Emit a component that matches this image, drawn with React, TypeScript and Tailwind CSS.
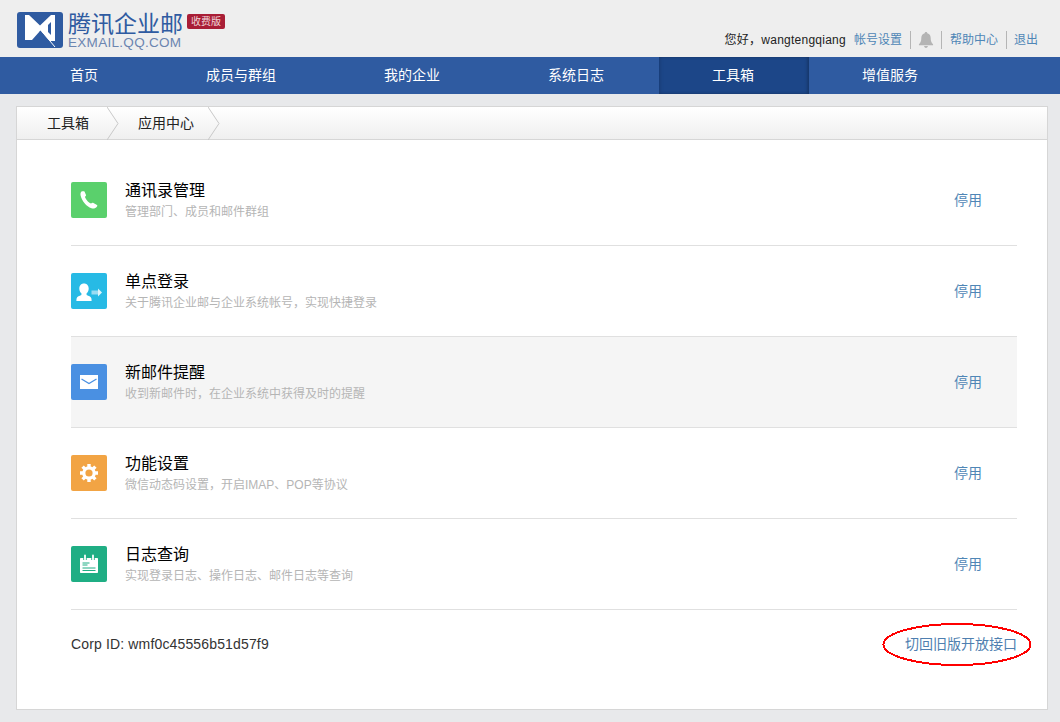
const navItems = ["首页", "成员与群组", "我的企业", "系统日志", "工具箱", "增值服务"];

function PhoneIcon() {
  return (
    <svg width="18" height="18" viewBox="0 0 18 18" fill="#fff" className="ml-[0px]">
      <path d="M1.500.5C2.500 0 4 0 4.500.6L6 4c.2.600-.2 1-1 1.800.5 2.200 3 5.700 6 6.700 1-.7 1.500-1 2-.7l4 2.200c.5.500.5 1 0 1.500-1.500 2-3.500 2.500-5.500 1.800C6.500 15.500 1.800 10 .6 4.500.3 3 .5 1.300 1.500.5Z" />
    </svg>
  );
}

function UserIcon() {
  return (
    <svg width="36" height="36" viewBox="0 0 36 36">
      <path fill="#fff" d="M13 10.500c3 0 4.700 2.200 4.700 4.900 0 2-.8 3.800-2.100 4.900v1.600c2.200.9 4.100 1.700 4.600 3 .3.700.4 1.600.4 3.100H5.400c0-1.500.1-2.400.4-3.100.5-1.300 2.400-2.100 4.600-3v-1.600c-1.300-1.100-2.100-2.900-2.100-4.900 0-2.700 1.700-4.900 4.700-4.900Z" />
      <path fill="#9adcf2" d="M20.500 17.500H27v4h-6.500Z" />
      <path fill="#fff" d="M27 15.500l4 4-4 4Z" opacity="0.85" />
    </svg>
  );
}

function MailIcon() {
  return (
    <svg width="18" height="14" viewBox="0 0 18 14">
      <rect width="18" height="14" fill="#fff" />
      <path d="M1.500 4 9 8.500 16.500 4" fill="none" stroke="#4a90e2" strokeWidth="1.300" />
    </svg>
  );
}

function GearIcon() {
  return (
    <svg width="18" height="18" viewBox="0 0 18 18">
      <circle cx="9" cy="9" r="5.200" fill="none" stroke="#fff" strokeWidth="3.200" />
      <path stroke="#fff" strokeWidth="3.400" d="M9 0v3.200M9 14.800V18M0 9h3.200M14.800 9H18M2.600 2.600l2.300 2.300M13.100 13.100l2.300 2.300M2.600 15.400l2.300-2.300M13.100 4.900l2.300-2.300" />
    </svg>
  );
}

function NoteIcon() {
  return (
    <svg width="18" height="20" viewBox="0 0 18 20">
      <path fill="#fff" d="M1 4h16c.6 0 1 .4 1 1v13c0 .6-.4 1-1 1H1c-.6 0-1-.4-1-1V5c0-.6.400-1 1-1Z" />
      <path stroke="#1fae84" strokeWidth="3.400" d="M5 1v5M13 1v5" />
      <path stroke="#fff" strokeWidth="1.800" strokeLinecap="round" d="M5 1.500v4M13 1.500v4" />
      <path stroke="#1fae84" strokeWidth="1" d="M2.500 9h7M2.500 11h5M2.500 14h13M2.500 16.500h13" />
    </svg>
  );
}

const tools = [
  { title: "通讯录管理", desc: "管理部门、成员和邮件群组", color: "bg-[#5ad06c]", icon: <PhoneIcon /> },
  { title: "单点登录", desc: "关于腾讯企业邮与企业系统帐号，实现快捷登录", color: "bg-[#27bae5]", icon: <UserIcon /> },
  { title: "新邮件提醒", desc: "收到新邮件时，在企业系统中获得及时的提醒", color: "bg-[#4a90e2]", icon: <MailIcon />, hover: true },
  { title: "功能设置", desc: "微信动态码设置，开启IMAP、POP等协议", color: "bg-[#f2a444]", icon: <GearIcon /> },
  { title: "日志查询", desc: "实现登录日志、操作日志、邮件日志等查询", color: "bg-[#1fae84]", icon: <NoteIcon /> },
];

function Crumb({ label, className }: { label: string; className: string }) {
  return (
    <div className={`flex h-full items-center ${className}`}>
      <span className="text-[14px] text-[#222]">{label}</span>
      <svg width="12" height="33" viewBox="0 0 12 33" className="ml-auto" fill="none" stroke="#c8c8c8">
        <path d="M0 0 11 16.500 0 33" />
      </svg>
    </div>
  );
}

export default function App() {
  return (
    <div className="min-h-[722px] bg-[#e8e9eb] font-['Liberation_Sans','Noto_Sans_CJK_SC',sans-serif]">
      <header className="flex h-[57px] items-start justify-between bg-[#eeeeee] pl-[17px] pr-[22px]">
        <div className="flex items-start pt-[12px]">
          <svg width="46" height="36" viewBox="0 0 46 36">
            <rect width="46" height="36" rx="3" fill="#2f5ba1" />
            <path fill="#fff" d="M8 3h4l11 10.500L34 3h4v26h-6l-9-10-8 9H8Z" />
            <path fill="#2f5ba1" d="M23 7.500 13 3h20Z" />
            <path fill="#2f5ba1" d="M31 13l3-3v13l-3-3Z" />
            <path stroke="#2f5ba1" strokeWidth="1.200" d="m23 19 15 17" />
            <path stroke="#fff" strokeWidth="1" d="m25 19.500 13 15.500" />
          </svg>
          <div className="ml-[5px] flex w-[114px] flex-col">
            <span className="h-[25px] whitespace-nowrap text-[23px] leading-[25px] text-[#2f5ba1]">腾讯企业邮</span>
            <span className="-mt-[1px] whitespace-nowrap text-[13.500px] leading-[13px] tracking-[0.300px] text-[#6b85b0]">EXMAIL.QQ.COM</span>
          </div>
          <span className="ml-[5px] mt-[2px] flex h-[15px] w-[38px] items-center justify-center rounded-[2px] bg-[#a91e36] text-[10px] text-[#f0d5d8]">收费版</span>
        </div>
        <div className="flex items-center pt-[31px] text-[12px] leading-[18px]">
          <span className="tracking-[0.250px] text-[#222]">您好，wangtengqiang</span>
          <span className="ml-[8px] text-[#4f86b6]">帐号设置</span>
          <span className="ml-[8px] h-[18px] w-px bg-[#b5b5b5]" />
          <svg width="16" height="16" viewBox="0 0 16 17" fill="#b4b4b4" className="ml-[7px]">
            <path d="M8 0c.8 0 1.300.5 1.400 1.200C12 1.900 13 4 13 6.500c0 3 .6 5 2.500 6.500v1H.5v-1C2.400 11.500 3 9.500 3 6.500 3 4 4 1.900 6.600 1.200 6.700.5 7.200 0 8 0ZM6 15h4c0 1.100-.9 2-2 2s-2-.9-2-2Z" />
          </svg>
          <span className="ml-[7px] h-[18px] w-px bg-[#b5b5b5]" />
          <span className="ml-[8px] text-[#4f86b6]">帮助中心</span>
          <span className="ml-[8px] h-[18px] w-px bg-[#b5b5b5]" />
          <span className="ml-[7px] text-[#4f86b6]">退出</span>
        </div>
      </header>

      <nav className="flex h-[37px] bg-[#2f5ba1] pl-[17px]">
        {navItems.map((item) => (
          <div
            key={item}
            className={`flex items-center pl-[53px] pr-[55px] text-[14px] text-white ${
              item === "工具箱" ? "bg-[#1c4688] shadow-[inset_-2px_0_3px_rgba(0,0,0,0.2),inset_2px_0_3px_rgba(0,0,0,0.1)]" : ""
            }`}
          >
            {item}
          </div>
        ))}
      </nav>

      <main className="pb-[12px] pl-[16px] pr-[12px] pt-[12px]">
        <section className="h-[604px] border border-[#d6d6d6] bg-white">
          <div className="flex h-[33px] border-b border-[#d6d6d6] bg-[linear-gradient(180deg,#ffffff_0%,#efefef_100%)] pl-[30px]">
            <Crumb label="工具箱" className="w-[72px]" />
            <Crumb label="应用中心" className="ml-[19px] w-[82px]" />
          </div>

          <div className="ml-[54px] mr-[30px] pt-[15px]">
            {tools.map((tool) => (
              <div
                key={tool.title}
                className={`flex h-[91px] items-center border-b border-[#e0e0e0] ${tool.hover ? "bg-[#f5f5f5]" : ""}`}
              >
                <div className={`flex h-[36px] w-[36px] shrink-0 items-center justify-center rounded-[2px] ${tool.color}`}>
                  {tool.icon}
                </div>
                <div className="ml-[18px] flex-1 pt-[2px]">
                  <div className="text-[16px] leading-[22px] text-black">{tool.title}</div>
                  <div className="text-[12px] leading-[20px] text-[#b5b5b5]">{tool.desc}</div>
                </div>
                <span className="mr-[35px] text-[14px] text-[#4f86b6]">停用</span>
              </div>
            ))}

            <div className="relative flex h-[68px] items-center justify-between text-[14px]">
              <span className="tracking-[0.150px] text-[#333]">Corp ID: wmf0c45556b51d57f9</span>
              <span className="text-[#4f7fb0]">切回旧版开放接口</span>
              <svg width="152" height="44" viewBox="0 0 152 44" fill="none" className="absolute right-[-16px] top-[13px]" shapeRendering="crispEdges">
                <ellipse cx="76" cy="21.500" rx="73.500" ry="20.500" stroke="#ff0000" strokeWidth="2" />
              </svg>
            </div>
          </div>
        </section>
      </main>
    </div>
  );
}
